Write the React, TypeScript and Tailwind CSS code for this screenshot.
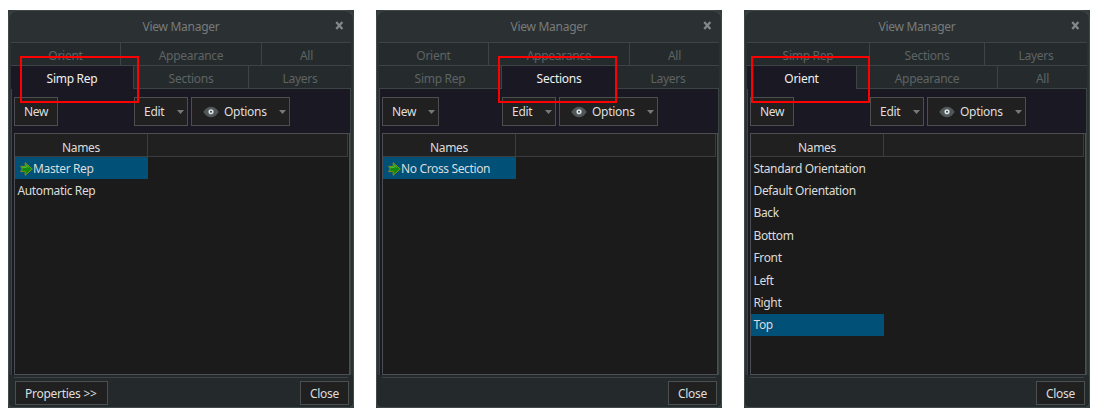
import clsx from "clsx";

interface TabDef {
  label: string;
  className: string;
}

interface ViewPanel {
  active: string;
  backTabs: TabDef[];
  frontTabs: TabDef[];
  newHasMenu: boolean;
  rows: string[];
  selected: string;
  hasArrow: boolean;
  hasProperties: boolean;
  highlight: string;
}

const ORIENT_TABS: TabDef[] = [
  { label: "Orient", className: "w-[110px] border-r" },
  { label: "Appearance", className: "w-[141px] border-r" },
  { label: "All", className: "flex-1" },
];

const SIMP_TABS: TabDef[] = [
  { label: "Simp Rep", className: "w-[123px] border-r" },
  { label: "Sections", className: "w-[115px] border-r" },
  { label: "Layers", className: "flex-1" },
];

const PANELS: ViewPanel[] = [
  {
    active: "Simp Rep",
    backTabs: ORIENT_TABS,
    frontTabs: SIMP_TABS,
    newHasMenu: false,
    rows: ["Master Rep", "Automatic Rep"],
    selected: "Master Rep",
    hasArrow: true,
    hasProperties: true,
    highlight: "left-3",
  },
  {
    active: "Sections",
    backTabs: ORIENT_TABS,
    frontTabs: SIMP_TABS,
    newHasMenu: true,
    rows: ["No Cross Section"],
    selected: "No Cross Section",
    hasArrow: true,
    hasProperties: false,
    highlight: "left-[122px]",
  },
  {
    active: "Orient",
    backTabs: SIMP_TABS,
    frontTabs: ORIENT_TABS,
    newHasMenu: false,
    rows: [
      "Standard Orientation",
      "Default Orientation",
      "Back",
      "Bottom",
      "Front",
      "Left",
      "Right",
      "Top",
    ],
    selected: "Top",
    hasArrow: false,
    hasProperties: false,
    highlight: "left-[7px]",
  },
];

function Caret() {
  return (
    <svg width="7" height="4" viewBox="0 0 7 4" className="shrink-0">
      <path d="M0 0h7L3.5 4z" fill="#777979" />
    </svg>
  );
}

function EyeIcon() {
  return (
    <svg width="16" height="12" viewBox="0 0 16 12" className="shrink-0">
      <path d="M0.3 6C2.6 2.3 5 .8 8 .8S13.4 2.3 15.7 6C13.4 9.7 11 11.2 8 11.2S2.6 9.7.3 6z" fill="#50575b" />
      <circle cx="8" cy="5.8" r="3" fill="#7b8286" />
      <circle cx="8" cy="5.8" r="2.4" fill="#e6e9ea" />
      <circle cx="8" cy="5.8" r="1" fill="#3a4043" />
    </svg>
  );
}

function ArrowIcon() {
  return (
    <svg width="13" height="14" viewBox="0 0 13 14" className="shrink-0">
      <path d="M.6 4.4h4.6V.7L12.3 7l-7.1 6.3V9.6H.6L2.3 7z" fill="#128a0f" stroke="#8c8a1c" strokeWidth="1" />
      <path d="M2.3 5.5h4V3.2L9 5.6" fill="none" stroke="#3cc230" strokeWidth="1" />
    </svg>
  );
}

function TabRow({ tabs, active }: { tabs: TabDef[]; active?: string }) {
  return (
    <div className="flex h-[23px]">
      {tabs.map((tab) => (
        <div
          key={tab.label}
          className={clsx(
            "flex items-center justify-center border-[#3c4446] pt-[3px]",
            tab.className,
            tab.label === active
              ? "bg-[#1a1923] text-[#f0f0f0]"
              : "border-b bg-[#252b2d] text-[#5e6364]",
          )}
        >
          {tab.label}
        </div>
      ))}
    </div>
  );
}

const BUTTON = "flex items-center border border-[#4b4f50] bg-[#202020] text-[#dedede]";

function ViewManager({ panel }: { panel: ViewPanel }) {
  return (
    <section className="relative h-[398px] w-[346px] bg-[#343b3e]">
      <div className="flex h-full flex-col rounded-t-[9px] rounded-b-[5px] border border-[#41494b] bg-[#2b3032] px-0.5">
        <header className="relative flex h-[31px] shrink-0 items-center justify-center text-[#777b7c]">
          <span>View Manager</span>
          <svg width="9" height="9" viewBox="0 0 9 9" className="absolute top-[10px] right-[7px]">
            <path d="M1.2 1l6.2 7M7.4 1L1.2 8" stroke="#858888" strokeWidth="2.2" />
          </svg>
        </header>

        <div className="flex h-[333px] shrink-0 flex-col border-x border-t border-[#3c4446] bg-[#1a1923]">
          <div className="-mx-px">
            <TabRow tabs={panel.backTabs} />
            <TabRow tabs={panel.frontTabs} active={panel.active} />
          </div>

          <div className="mt-2 flex h-[29px] pl-0.5">
            <div className="w-[120px]">
              <button
                type="button"
                className={clsx(BUTTON, "h-[29px] pl-[9px]", panel.newHasMenu ? "w-[57px] justify-between pr-[3px]" : "w-11")}
              >
                New
                {panel.newHasMenu && <Caret />}
              </button>
            </div>
            <button type="button" className={clsx(BUTTON, "h-[29px] w-[54px] justify-between pr-[3px] pl-[9px]")}>
              Edit
              <Caret />
            </button>
            <button type="button" className={clsx(BUTTON, "ml-[3px] h-[29px] w-[99px] pr-[3px] pl-[11px]")}>
              <EyeIcon />
              <span className="ml-[5px] flex-1 text-left">Options</span>
              <Caret />
            </button>
          </div>

          <div className="mt-[7px] ml-0.5 flex h-[242px] w-[336px] flex-col border border-[#4b4f50] bg-[#1b1b1b] tracking-[-0.36px] text-[#dcdcdc]">
            <div className="mr-px flex h-[23px] border-r border-b border-[#3b3d3e] bg-[#202020]">
              <div className="flex w-[133px] items-center justify-center border-r border-[#3b3d3e] pt-[5px]">
                Names
              </div>
            </div>
            {panel.rows.map((row) => (
              <div
                key={row}
                className={clsx(
                  "flex h-[22.4px] w-[133px] items-center pt-px whitespace-nowrap",
                  row === panel.selected && "bg-[#005078]",
                  row === panel.selected && panel.hasArrow ? "pl-[5px]" : "pl-0.5",
                )}
              >
                {row === panel.selected && panel.hasArrow && <ArrowIcon />}
                <span className={clsx(!(row === panel.selected && panel.hasArrow) && "ml-[0.5px]")}>{row}</span>
              </div>
            ))}
          </div>
        </div>

        <footer className="-mx-0.5 flex h-8 shrink-0 flex-col rounded-b-[5px] bg-[#24292b] px-[5px]">
          <div className="mt-0.5 h-px shrink-0 bg-[#3c4446]" />
          <div className="mt-[3px] flex justify-between pl-px">
            {panel.hasProperties ? (
              <button type="button" className={clsx(BUTTON, "h-6 w-[93px] pt-px pl-[9px]")}>
                Properties &gt;&gt;
              </button>
            ) : (
              <span />
            )}
            <button type="button" className={clsx(BUTTON, "-mr-px h-6 w-[49px] justify-center pt-px")}>
              Close
            </button>
          </div>
        </footer>
      </div>

      {/* red call-out over the active tab */}
      <div className={clsx("absolute top-[46px] h-[47px] w-[119px] border-2 border-[#ff0000]", panel.highlight)} />
    </section>
  );
}

export default function App() {
  return (
    <main className="flex h-[413px] w-[1097px] gap-[22px] bg-white pt-2.5 pl-2 font-['Noto_Sans','Open_Sans',sans-serif] text-[12px] leading-4 tracking-[-0.27px]">
      {PANELS.map((panel) => (
        <ViewManager key={panel.active} panel={panel} />
      ))}
    </main>
  );
}
